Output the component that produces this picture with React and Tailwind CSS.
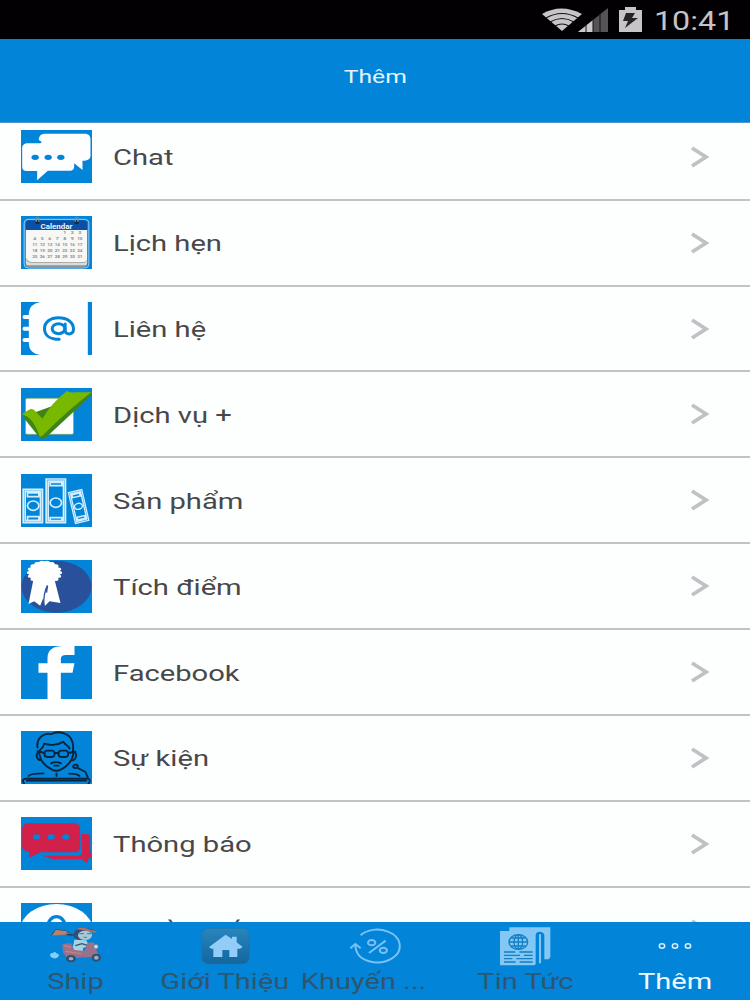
const WHITE = '#fdfeff';
const BLUE = '#0284d9';

function ChatIcon() {
  return (
    <>
      <path fill={WHITE} d="M53 30c0-13 7-19 19-19h118c12 0 18 6 18 18v48c0 10-8 15-24 15v28l-25-20z" />
      <path fill={WHITE} d="M3 55c0-10 7-15 17-15h38l4-4h92l5 10v64c0 8-5 12-13 12H80l-32 29v-28H17c-9 0-14-4-14-13z" />
      <ellipse cx="42" cy="82" rx="11" ry="8" />
      <ellipse cx="81" cy="82" rx="11" ry="8" />
      <ellipse cx="119" cy="82" rx="11" ry="8" />
    </>
  );
}

const calendarRows = [
  ['', '', '', '', '1', '2', '3'],
  ['4', '5', '6', '7', '8', '9', '10'],
  ['11', '12', '13', '14', '15', '16', '17'],
  ['18', '19', '20', '21', '22', '23', '24'],
  ['25', '26', '27', '28', '29', '30', '31'],
];

function CalendarIcon() {
  return (
    <>
      <rect x="9" y="10" width="194" height="146" rx="12" fill="none" stroke="#9bd0f5" strokeWidth="3" />
      <path fill="#8f9496" d="M14 132h184v13q0 8-8 8H22q-8 0-8-8z" />
      <path fill="#d9dcdd" d="M14 128h184v12q0 8-8 8H22q-8 0-8-8z" />
      <path fill="#a9adaf" d="M14 126h184q0 15-12 15H34q-20 0-20-15z" />
      <path fill="#f7f7f5" d="M14 40h184v86q0 12-12 12H34q-12 0-20-12z" />
      <path fill="#0b50a5" d="M14 42V22q0-9 9-9h166q9 0 9 9v20z" />
      <text x="106" y="38" textAnchor="middle" fontSize="19" fontWeight="bold" fill="#e8f3ff" textLength="96" lengthAdjust="spacingAndGlyphs">Calendar</text>
      {[48, 165].map((x) => (
        <g key={x}>
          <ellipse cx={x + 1} cy="19" rx="7" ry="6" fill="#152b45" />
          <path d={`M${x - 3} 18V8q4-8 8 0v10`} fill="none" stroke="#7c8790" strokeWidth="4" />
        </g>
      ))}
      {calendarRows.map((row, r) =>
        row.map((day, c) => (
          <text key={`${r}-${c}`} x={41 + c * 22.5} y={55 + r * 17.5} textAnchor="middle" fontSize="12" fontWeight="bold" fill="#8b8e93" textLength={day.length > 1 ? 16 : 9} lengthAdjust="spacingAndGlyphs">{day}</text>
        ))
      )}
    </>
  );
}

function ContactIcon() {
  return (
    <>
      <path fill={WHITE} d="M57 0h143v159H58Q23 154 23 122v-2H8q-8-6 0-12h15V86H8q-8-6 0-12h15V51H8q-8-6 0-12h15v-6Q25 6 57 0z" />
      <g fill="none" stroke={BLUE} strokeWidth="9" strokeLinecap="round">
        <ellipse cx="112" cy="80" rx="19" ry="15" />
        <path d="M132 66v19c0 15 25 15 25-4C157 60 137 47 112 47 87 47 70 61 70 80c0 20 17 32 44 32" />
      </g>
    </>
  );
}

function ServiceIcon() {
  return (
    <>
      <rect x="13" y="31" width="144" height="108" rx="5" fill={WHITE} stroke="#7fac4a" strokeWidth="2" />
      <path fill="#3f8416" d="M5 86l53 66 14-1L212 20v-9z" />
      <path fill="#78b900" d="M2 79L12 72 28 63q7-1 12 4l24 25Q90 46 137 9q12 6 24 4h50Q145 62 65 142l-9 5Q35 85 2 79z" />
    </>
  );
}

function ProductIcon() {
  return (
    <g fill="none" stroke="#d2efff" strokeWidth="5">
      <path d="M6 46h58v100H6zM12 52h46v88H12zM19 57h34v11H19zM19 128h34v11H19z" />
      <ellipse cx="36" cy="95" rx="17" ry="14" />
      <path d="M75 15h58v131H75zM81 21h46v119H81zM87 25h35v10H87zM87 131h35v9H87z" />
      <ellipse cx="104" cy="86" rx="17" ry="14" />
      <g transform="rotate(-13 172 98)" strokeWidth="4">
        <path d="M152 50h41v95h-41zM157 55h31v85h-31zM161 59h23v9h-23zM161 128h23v8h-23z" />
        <ellipse cx="172" cy="97" rx="12" ry="9" />
      </g>
    </g>
  );
}

function RewardIcon() {
  const petals = Array.from({ length: 18 }, (_, i) => (i * Math.PI) / 9);
  return (
    <>
      <ellipse cx="106" cy="80" rx="105" ry="78" fill="#29509a" />
      <g fill="#fff">
        <ellipse cx="70" cy="38" rx="47" ry="34" />
        {petals.map((a) => (
          <ellipse key={a} cx={70 + Math.cos(a) * 45} cy={38 + Math.sin(a) * 31} rx="8" ry="5" />
        ))}
        <path d="M37 58L22 132l17-8 18 13 9-22 5 23 14-14 33 5L99 55z" />
      </g>
      <path d="M79 76Q66 100 68 138M79 78l-3 20" fill="none" stroke="#29509a" strokeWidth="4" />
    </>
  );
}

function FacebookIcon() {
  return <path fill="#fff" d="M79 159V80H52V52h27V37C79 11 97 0 126 0h34v27h-22c-15 0-19 4-19 14v11h41l-6 28h-35v79z" />;
}

function EventIcon() {
  return (
    <g fill="none" stroke="#06243f" strokeWidth="5.5" strokeLinecap="round" strokeLinejoin="round">
      <path d="M49 50C45 24 63 5 91 9c22-12 57-1 62 22 4 10 4 18 2 30" />
      <path d="M54 61c3-8 13-9 15-23 20 7 44 3 57-6 5 11 18 12 19 21" />
      <path d="M49 60l5 3c1 28 19 43 39 53 9 5 18 4 27-1 20-10 34-26 37-51l6-3" />
      <path d="M52 63c-11 8-3 25 6 24M160 63c10 8 3 24-6 25" />
      <rect x="70" y="59" width="30" height="19" rx="8" />
      <rect x="112" y="59" width="29" height="19" rx="8" />
      <path d="M55 62l15 4M100 66h12M141 66l15-3M90 97c10-5 20-5 29 0M99 104h13" />
      <path d="M22 135c5-7 23-8 45-8M144 128c17 0 26 1 31 7M106 127v8" />
      <ellipse cx="163" cy="106" rx="7" ry="5" />
      <path d="M170 111l23 12 7 17M9 158c-8-11-2-15 8-15h177c13 0 15 5 8 15M17 149h178" />
    </g>
  );
}

function NoticeIcon() {
  return (
    <>
      <g fill="#d12049">
        <path d="M180 51h15c9 0 12 5 12 12v40l5 19-10 2-4 14-18-12-84 1-31-11h108c7 0 9-5 9-11z" />
        <path d="M3 37c0-12 8-18 20-18h133c14 0 21 6 21 18v51c0 12-6 18-18 18H57l-33 17v-18C10 102 3 98 3 88z" />
      </g>
      <ellipse cx="46" cy="60" rx="11" ry="8" />
      <ellipse cx="90" cy="60" rx="11" ry="8" />
      <ellipse cx="134" cy="60" rx="11" ry="8" />
    </>
  );
}

function PersonIcon() {
  return (
    <>
      <ellipse cx="106" cy="80" rx="108" ry="77" fill={WHITE} />
      <ellipse cx="106" cy="68" rx="25" ry="27" fill="none" stroke={BLUE} strokeWidth="10" />
    </>
  );
}

const items = [
  { label: 'Chat', Icon: ChatIcon },
  { label: 'Lịch hẹn', Icon: CalendarIcon },
  { label: 'Liên hệ', Icon: ContactIcon },
  { label: 'Dịch vụ +', Icon: ServiceIcon },
  { label: 'Sản phẩm', Icon: ProductIcon },
  { label: 'Tích điểm', Icon: RewardIcon },
  { label: 'Facebook', Icon: FacebookIcon },
  { label: 'Sự kiện', Icon: EventIcon },
  { label: 'Thông báo', Icon: NoticeIcon },
  { label: 'Truyền số mới', Icon: PersonIcon },
];

function ListRow({ label, Icon }) {
  return (
    <li className="flex h-[85.9px] shrink-0 items-center border-b-2 border-[#c3c3c4] pl-[21px] pr-10">
      <svg viewBox="0 0 212 159" className="h-[53px] w-[71px] shrink-0 bg-[#0284d9]" fill={BLUE}>
        <Icon />
      </svg>
      <span className="ml-[21px] mt-[3px] flex-1 origin-left scale-x-[1.325] whitespace-nowrap text-[22px] leading-7 text-[#48484a]">
        {label}
      </span>
      <svg viewBox="0 0 20 22" className="h-[22px] w-5 shrink-0" fill="none" stroke="#bfc2c4" strokeWidth="3.8">
        <path d="M2 2l14 9-14 9" />
      </svg>
    </li>
  );
}

function ShipIcon() {
  return (
    <>
      <path d="M9 29l14-18 34 5 15 11" fill="#8a7473" stroke="#32506e" strokeWidth="3" />
      <path d="M23 12l34 4-6 9-35 3z" fill="#b88370" />
      <path d="M56 26l24 1" stroke="#243e5c" strokeWidth="4" />
      <path d="M76 26q4-21 39-19l29 7-6 5-15-2-2 19-24 8-19-9z" fill="#314f73" />
      <path d="M86 9q19-9 44 4l18 2-9 5-25-6z" fill="#b9705f" />
      <ellipse cx="111" cy="28" rx="21" ry="14" fill="#a5c9da" />
      <path d="M94 23h14M117 23h12M107 34h9" stroke="#42617b" strokeWidth="2.5" />
      <path d="M79 41l36 2 8 16-18 7-1 13-31-5z" fill="#a6d3e2" />
      <path d="M82 59l20-6 18 6" fill="none" stroke="#34526e" strokeWidth="4" />
      <path d="M43 54l26-3 10 21 30 3 10-25 18-1 13 36-15 8-78 4-12-18z" fill="#9b7089" />
      <path d="M48 59l20 5M52 76l48 7" stroke="#c98282" strokeWidth="4" />
      <circle cx="144" cy="62" r="7" fill="#c6dce9" stroke="#536786" strokeWidth="2" />
      <ellipse cx="69" cy="98" rx="15" ry="11" fill="#30506f" />
      <ellipse cx="69" cy="98" rx="7" ry="5" fill="#9baec2" />
      <ellipse cx="145" cy="95" rx="14" ry="12" fill="#30506f" />
      <ellipse cx="145" cy="95" rx="7" ry="6" fill="#9baec2" />
      <path d="M6 88q0-9 9-7 6-6 10 1 10 2 7 9-5 9-18 5-7-2-8-8z" fill="#83d0f4" />
      <path d="M42 114h93" stroke="#53779a" strokeWidth="2" opacity="0.7" />
    </>
  );
}

function HomeIcon() {
  return (
    <>
      <defs>
        <linearGradient id="homeTile" x1="0" y1="0" x2="0" y2="1">
          <stop offset="0" stopColor="#2985bc" />
          <stop offset="1" stopColor="#12669f" />
        </linearGradient>
      </defs>
      <rect x="11" y="7" width="143" height="107" rx="20" fill="url(#homeTile)" stroke="#2175a9" strokeWidth="2" />
      <path fill="#92cdf8" d="M83 26l19 13v-7h14v17l18 14-8 5h-8v25H94V72H73v21H46V68h-6l-7-5z" />
    </>
  );
}

function PromoIcon() {
  return (
    <g fill="none" stroke="#79c1f4" strokeWidth="6">
      <path d="M38 28C57 10 91 6 120 17c42 16 48 58 11 81-37 22-108 12-109-42" />
      <path d="M7 67l15-13 16 13M63 81l50-37" />
      <ellipse cx="71" cy="50" rx="11" ry="8" />
      <ellipse cx="106" cy="73" rx="11" ry="8" />
    </g>
  );
}

function NewsIcon() {
  return (
    <>
      <path fill="#83c7f5" d="M6 15h28V4h123v88q-2 8-11 8h-7V28q-2-11-14-11t-12 11v85q0 5-9 5H6z" />
      <path fill="none" stroke="#83c7f5" strokeWidth="6" d="M126 25v87" />
      <g fill="none" stroke="#147fc4" strokeWidth="4">
        <ellipse cx="61" cy="48" rx="28" ry="22" />
        <ellipse cx="61" cy="48" rx="13" ry="22" />
        <path d="M61 26v44M33 48h56M39 36h44M39 60h44" />
        <path d="M18 78h34M64 78h40M18 88h48M78 88h26M18 98h25M55 98h49M18 108h35M65 108h39" />
      </g>
    </>
  );
}

function MoreIcon() {
  return (
    <g fill="none" stroke="#d9f1ff" strokeWidth="4.5">
      <ellipse cx="42" cy="60" rx="8" ry="6.5" />
      <ellipse cx="81" cy="60" rx="8" ry="6.5" />
      <ellipse cx="120" cy="60" rx="8" ry="6.5" />
    </g>
  );
}

const tabs = [
  { label: 'Ship', Icon: ShipIcon },
  { label: 'Giới Thiệu', Icon: HomeIcon },
  { label: 'Khuyến ...', Icon: PromoIcon, shift: true },
  { label: 'Tin Tức', Icon: NewsIcon },
  { label: 'Thêm', Icon: MoreIcon, active: true },
];

function StatusBar() {
  return (
    <div className="flex h-[39px] shrink-0 items-center justify-end bg-[#020003] pr-4">
      <svg viewBox="0 0 102 28" className="h-7 w-[102px]">
        <path d="M2 8Q21-3 42 8L22 25z" fill="#c7c5c7" />
        <path d="M6 12q16-9 32 0M10 16q12-7 24 0M15 20q7-4 14 0" fill="none" stroke="#151315" strokeWidth="1.1" />
        <path d="M38 26L68 2v24z" fill="#555356" />
        <path d="M38 26l15-12v12z" fill="#cbc9cb" />
        <path d="M46 18v8M53 12v14M60 7v19" stroke="#151315" strokeWidth="1" />
        <path d="M79 4h6V1h11v3h6v22H79z" fill="#c7c5c7" />
        <path d="M86 7h9l-3 5h6L85 22l3-7h-5z" fill="#262427" />
      </svg>
      <span className="ml-3 w-20">
        <span className="mt-0.5 block origin-left scale-x-[1.24] whitespace-nowrap text-[26px] leading-8 text-[#c5c3c5]">10:41</span>
      </span>
    </div>
  );
}

export default function App() {
  return (
    <div className="flex h-[1000px] w-[750px] flex-col overflow-hidden bg-[#fdfefe] font-['Roboto',sans-serif]">
      <StatusBar />
      <header className="flex h-[84px] shrink-0 justify-center border-b border-[#4b99ce] bg-[#0284d9] pt-[25px]">
        <h1 className="scale-x-[1.3] text-[19px] leading-[26px] text-[#e2f5ff]">Thêm</h1>
      </header>
      <main className="min-h-0 flex-1 overflow-hidden">
        <ul className="-mt-[8.2px] flex flex-col">
          {items.map((item) => (
            <ListRow key={item.label} {...item} />
          ))}
        </ul>
      </main>
      <nav className="grid h-[78px] shrink-0 grid-cols-5 bg-[#0284d9]">
        {tabs.map(({ label, Icon, active, shift }) => (
          <div key={label} className="flex flex-col items-center pt-1">
            <svg viewBox="0 0 162 120" className="h-10 w-[54px] shrink-0">
              <Icon />
            </svg>
            <span
              className={`mt-px scale-x-[1.32] whitespace-nowrap text-[22px] leading-[30px] ${active ? 'text-[#eefaff]' : 'text-[#30566f]'} ${shift ? '-ml-6' : ''}`}
            >
              {label}
            </span>
          </div>
        ))}
      </nav>
    </div>
  );
}
